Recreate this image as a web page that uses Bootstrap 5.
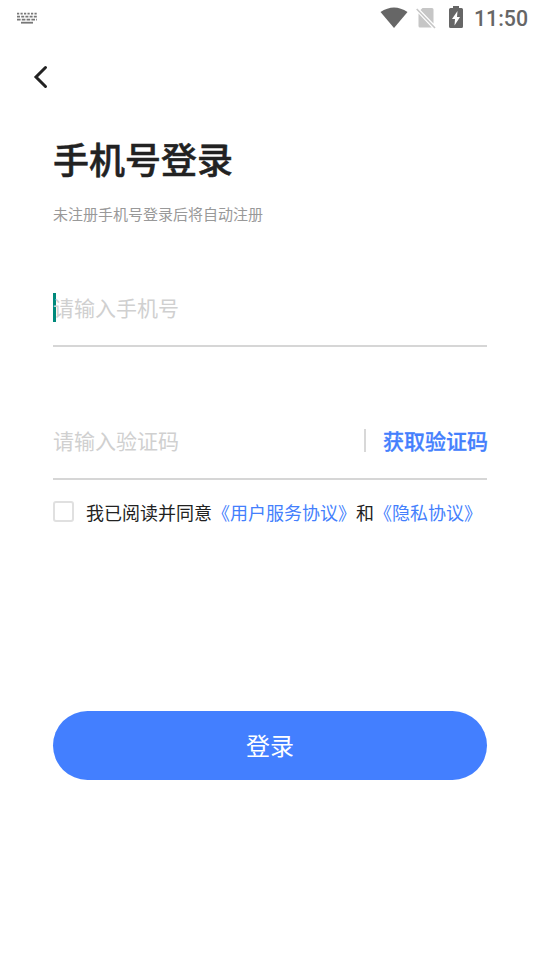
<!DOCTYPE html>
<html lang="zh-CN">
<head>
<meta charset="utf-8">
<meta name="viewport" content="width=device-width, initial-scale=1">
<title>手机号登录</title>
<link href="https://cdn.jsdelivr.net/npm/bootstrap@5.3.0/dist/css/bootstrap.min.css" rel="stylesheet">
<style>
body{font-family:Roboto,"Noto Sans CJK SC",sans-serif;background:#fff;color:#222;width:540px;height:960px;overflow:hidden}
.status-bar{height:36px;padding:0 12px 0 16px;color:#666}
.clock{font-size:21.300px;font-weight:500;line-height:36px;margin-left:11px;padding-top:2px}
.battery-icon{margin-left:13px;margin-bottom:2px}
.top-nav{height:80px;padding:28px 0 0 32px}
.back-btn{line-height:0;color:#222}
.login-form{padding:0 53px}
.login-title{font-size:36px;font-weight:500;-webkit-text-stroke:.5px #222;line-height:54px;margin-top:19px}
.login-hint{font-size:15px;line-height:22px;color:#999;margin-top:15px}
.field-row{height:76px;border-bottom:2px solid #d6d6d6}
.phone-row{margin-top:45px}
.code-row{margin-top:57px}
.field-row .form-control{font-size:21px;line-height:30px;height:32px;padding:2px 0 0}
.field-row .form-control::placeholder{color:#d0d0d0;opacity:1}
.caret{position:absolute;left:0;top:22px;width:3px;height:29px;background:#00897b}
.code-divider{width:2px;height:23px;background:#d8d8d8;margin-bottom:2px}
.code-btn{font-size:21px;font-weight:500;-webkit-text-stroke:.3px #447ffd;line-height:30px;color:#447ffd;margin-left:17px;margin-right:-1px;padding-top:2px!important}
.agree-row{margin-top:16px;font-size:18px;line-height:28px}
.agree-row label{padding-top:4px;margin-bottom:-1px}
.agree-row .form-check-input{width:21px;height:21px;border:2px solid #e0e0e0;border-radius:3px;margin-right:12px}
.agree-row a{color:#447ffd}
.login-btn,.login-btn:hover{height:69px;font-size:24px;background:#437fff;color:#fff;margin-top:184px;padding-top:3px!important}
</style>
</head>
<body>
<header class="status-bar d-flex align-items-center">
<svg class="me-auto" width="22" height="13" viewBox="0 0 22 13" fill="none" stroke="#777" stroke-width="1.800"><path d="M1 1.700h20" stroke-dasharray="2.200 1.300"/><path d="M1 4.700h20" stroke-dasharray="3 1.200"/><path d="M1 7.700h20" stroke-dasharray="3.600 1.200"/><path d="M5 10.700h12"/></svg>
<svg width="28" height="22" viewBox="0 0 28 22"><path d="M.5 5Q14-4 27.500 5L14 21Z" fill="#666"/></svg>
<svg class="ms-2" width="20" height="22" viewBox="0 0 20 22"><path d="M6.500 1H16q1.500 0 1.500 1.500v14L4.500 3ZM2.500 6.500L15.700 20.500H4q-1.500 0-1.500-1.500Z" fill="#c6c6c6"/><path d="M.7 2L19 21" stroke="#c6c6c6" stroke-width="1.600"/></svg>
<svg class="battery-icon" width="14" height="22" viewBox="0 0 14 22"><path d="M4 0h6v2h2.500q1.500 0 1.500 1.500v17q0 1.500-1.500 1.500h-11Q0 22 0 20.500v-17Q0 2 1.500 2H4Z" fill="#666"/><path d="M8.500 5L3 13h3l-.5 6.500L11 11H8Z" fill="#fff"/></svg>
<span class="clock">11:50</span>
</header>
<nav class="top-nav"><button class="btn p-0 border-0 back-btn" aria-label="返回"><svg width="18" height="24" viewBox="0 0 18 24" fill="none" stroke="currentColor" stroke-width="3" stroke-linecap="round"><path d="M13.500 2.500L4 12l9.500 9.500"/></svg></button></nav>
<main class="login-form">
<h1 class="login-title mb-0">手机号登录</h1>
<p class="login-hint mb-0">未注册手机号登录后将自动注册</p>
<form>
<div class="field-row phone-row d-flex align-items-center position-relative"><span class="caret"></span><input class="form-control border-0 rounded-0 bg-transparent position-relative" type="tel" placeholder="请输入手机号"></div>
<div class="field-row code-row d-flex align-items-center"><input class="form-control border-0 rounded-0" placeholder="请输入验证码"><span class="code-divider flex-shrink-0"></span><button type="button" class="btn p-0 border-0 code-btn text-nowrap">获取验证码</button></div>
<div class="agree-row d-flex align-items-center text-nowrap"><input class="form-check-input mt-0 flex-shrink-0" type="checkbox" id="agree"><label for="agree">我已阅读并同意<a href="#" class="text-decoration-none">《用户服务协议》</a>和<a href="#" class="text-decoration-none">《隐私协议》</a></label></div>
<button type="button" class="btn w-100 rounded-pill border-0 p-0 login-btn">登录</button>
</form>
</main>
<script src="https://cdn.jsdelivr.net/npm/bootstrap@5.3.0/dist/js/bootstrap.bundle.min.js"></script>
</body>
</html>
